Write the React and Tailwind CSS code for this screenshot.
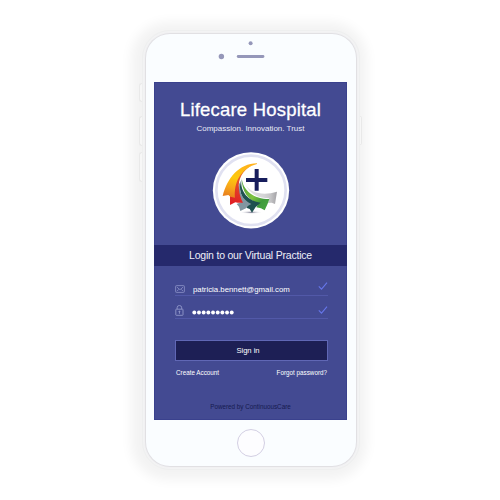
import React from "react";

function Logo() {
  return (
    <svg className="block h-[78px] w-[78px]" viewBox="21 21 234 234">
      <defs>
        <linearGradient id="gold" x1="0.6" y1="0" x2="0.3" y2="1">
          <stop offset="0" stopColor="#ffb21c" />
          <stop offset="0.45" stopColor="#fdc90c" />
          <stop offset="0.75" stopColor="#f8a51a" />
          <stop offset="1" stopColor="#e8801f" />
        </linearGradient>
        <linearGradient id="red" x1="0.6" y1="0" x2="0.4" y2="1">
          <stop offset="0" stopColor="#f4962a" />
          <stop offset="0.4" stopColor="#e4502a" />
          <stop offset="1" stopColor="#e01f24" />
        </linearGradient>
        <linearGradient id="silver" x1="0" y1="0" x2="1" y2="0">
          <stop offset="0" stopColor="#e6e6e8" />
          <stop offset="0.6" stopColor="#d3d3d5" />
          <stop offset="0.8" stopColor="#c4c4c6" />
          <stop offset="1" stopColor="#a3a2a6" />
        </linearGradient>
        <linearGradient id="green" x1="0" y1="0" x2="1" y2="1">
          <stop offset="0" stopColor="#4a9c3a" />
          <stop offset="0.5" stopColor="#7dc23f" />
          <stop offset="0.72" stopColor="#3f9a3b" />
          <stop offset="1" stopColor="#4aa844" />
        </linearGradient>
        <radialGradient id="floor">
          <stop offset="0" stopColor="#7f7f94" />
          <stop offset="1" stopColor="#ffffff" stopOpacity="0" />
        </radialGradient>
      </defs>
      <circle cx="138" cy="136" r="114.5" fill="#fff" />
      <circle cx="138" cy="136" r="104" fill="#fff" stroke="#e0e1f1" strokeWidth="8" />
      <ellipse cx="138" cy="202" rx="34" ry="5" fill="url(#floor)" />
      <path d="M122 120C138 146 178 152 216 140L210 177L200 173L189 174L192 160C160 160 134 146 122 120Z" fill="url(#silver)" />
      <path d="M110 98C113 136 146 162 193 162L188 176L179 196L168 190L154 187L160 176C130 165 110 140 110 98Z" fill="url(#green)" />
      <path d="M109 104C105 140 130 168 167 173L152 186L141 203L134 192L124 188L131 178C108 160 99 132 109 104Z" fill="#1f5150" />
      <path d="M107 108C99 140 112 164 139 177L127 184L123 190L106 198L102 185L95 177L108 172C94 152 96 126 107 108Z" fill="#8296a1" />
      <path d="M142 60C112 76 98 104 102 132Q104 156 114 173L98 173L91 172L75 180V153L84 150C84 110 105 72 142 60Z" fill="url(#red)" />
      <path d="M156 55C102 56 68 98 53 153L70 150L76 155L90 158C86 114 106 70 156 57Z" fill="url(#gold)" />
      <path d="M149 72h12v27h26v12h-26v26h-12v-26h-26V99h26z" fill="#171d5c" />
    </svg>
  );
}

function Check() {
  return (
    <svg className="h-[8px] w-[10px]" viewBox="0 0 10 8" fill="none">
      <path d="M.8 4.3L3.5 7.1L9 .7" stroke="#6676ea" strokeWidth="1.1" />
    </svg>
  );
}

function Mail() {
  return (
    <svg className="h-[8px] w-[10px]" viewBox="0 0 10 8" fill="none" stroke="#8d93c8" strokeWidth=".8">
      <rect x=".6" y=".6" width="8.8" height="6.8" rx=".8" />
      <path d="M1.7 1.8L4.2 4.2Q5 4.8 5.8 4.2L8.3 1.8M1.8 6.3L3.8 4.3M8.2 6.3L6.2 4.3" />
    </svg>
  );
}

function Lock() {
  return (
    <svg className="h-[11px] w-[9px]" viewBox="0 0 9 11" fill="none" stroke="#9298cb" strokeWidth=".9">
      <rect x=".8" y="4.2" width="7.2" height="6.1" rx=".5" />
      <path d="M2.1 4.2V2.8a2.3 2.3 0 0 1 4.6 0v1.4M4.4 6v2.8" />
      <circle cx="4.4" cy="6.5" r=".5" />
    </svg>
  );
}

function Dots() {
  return (
    <svg className="h-[5px] w-[43px]" viewBox="0 0 43 5" fill="#fff">
      {Array.from({ length: 9 }, (_, i) => (
        <circle key={i} cx={2.3 + i * 4.68} cy="2.5" r="1.95" />
      ))}
    </svg>
  );
}

export default function App() {
  return (
    <main className="flex h-[500px] w-[500px] flex-col items-center overflow-hidden bg-white pt-[30px] font-['Liberation_Sans',Arial,sans-serif] text-white">
      <div className="relative ml-[1px] h-[440px] w-[218px] rounded-[28px] border border-[#eeefef] bg-[#f3f3f4] p-[3px] shadow-[-2px_1px_12px_9px_rgba(0,0,0,0.05)]">
        <i className="absolute -left-[4px] top-[52px] h-[19px] w-[3px] rounded-l-sm border border-r-0 border-[#e9e9e9] bg-[#f7f7f7]" />
        <i className="absolute -left-[4px] top-[85px] h-[30px] w-[3px] rounded-l-sm border border-r-0 border-[#e9e9e9] bg-[#f7f7f7]" />
        <i className="absolute -left-[4px] top-[121px] h-[30px] w-[3px] rounded-l-sm border border-r-0 border-[#e9e9e9] bg-[#f7f7f7]" />
        <i className="absolute -right-[3px] top-[85px] h-[29px] w-[2px] rounded-r-sm border border-l-0 border-[#e9e9e9] bg-[#f7f7f7]" />
        <div className="flex h-[432px] w-[210px] flex-col items-center rounded-[24px] bg-[#fafdff] shadow-[0_0_1px_1px_#dfdee2]">
          <div className="flex h-[47.5px] w-full flex-col items-center">
            <svg className="h-[32px] w-[210px]" viewBox="0 0 210 32" fill="#9597b9">
              <circle cx="104.6" cy="9.3" r="2" />
              <circle cx="75.4" cy="22.5" r="2.7" />
              <rect x="90.8" y="21.1" width="27.6" height="2.8" rx="1.4" />
            </svg>
          </div>

          <section className="flex h-[338.5px] w-[193px] flex-col items-center border border-[#3a418d] bg-[#434a92]">
            <h1 className="mt-[16.5px] h-[22px] whitespace-nowrap text-[18.5px] leading-[22px] tracking-[0.2px] [-webkit-text-stroke:0.3px_white]">Lifecare Hospital</h1>
            <p className="mt-[3px] h-[10px] whitespace-nowrap text-[8px] leading-[10px] text-[#e8e9f5]">Compassion. Innovation. Trust</p>
            <div className="mt-[18px]"><Logo /></div>
            <h2 className="mt-[14.5px] flex h-[21px] w-[193px] items-center justify-center whitespace-nowrap bg-[#25296c] pb-[1px] text-[10.5px] leading-[12px] tracking-[-0.2px] text-[#eeeff8]">Login to our Virtual Practice</h2>

            <div className="ml-[2px] mt-[16px] flex h-[14px] w-[153px] items-start border-b border-[#5259a8]">
              <span className="mt-[3.5px] flex"><Mail /></span>
              <span className="ml-[8px] mt-[3px] whitespace-nowrap text-[7.8px] leading-[9px]">patricia.bennett@gmail.com</span>
              <span className="ml-auto flex"><Check /></span>
            </div>
            <div className="ml-[2px] mt-[9px] flex h-[14px] w-[153px] items-start border-b border-[#5259a8]">
              <Lock />
              <span className="ml-[7.5px] mt-[5px] flex"><Dots /></span>
              <span className="ml-auto mt-[1px] flex"><Check /></span>
            </div>

            <button className="ml-[2px] mt-[21px] flex h-[21px] w-[153px] items-center justify-center border border-[#6067b5] bg-[#1d1f55] pr-[7px] text-[7.6px] leading-[9px]">Sign in</button>
            <div className="ml-[2px] mt-[7.5px] flex h-[9px] w-[151px] justify-between whitespace-nowrap text-[6.3px] leading-[9px]">
              <span>Create Account</span>
              <span>Forgot password?</span>
            </div>
            <p className="mt-[25px] whitespace-nowrap text-[6.3px] leading-[9px] text-[#161a50]">Powered by ContinuousCare</p>
          </section>

          <span className="mt-[9px] h-[28px] w-[28px] rounded-full border border-[#d3cfe3] bg-[#fdfdff]" />
        </div>
      </div>
    </main>
  );
}
